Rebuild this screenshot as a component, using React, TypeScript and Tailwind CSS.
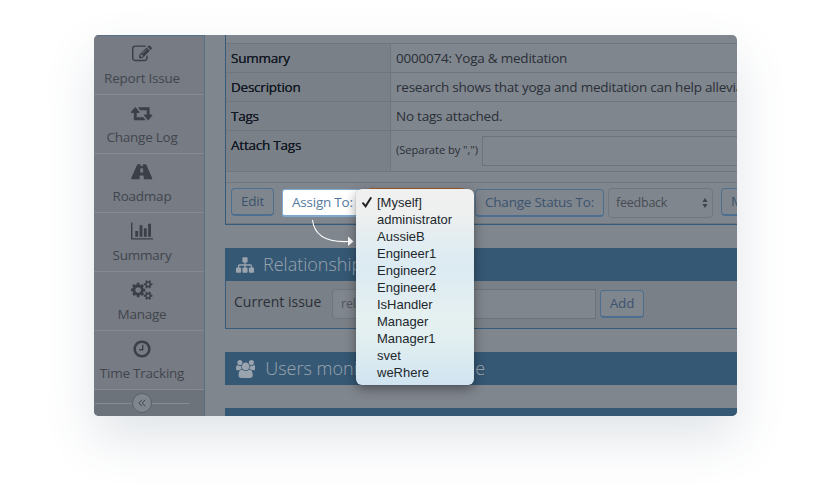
import React from "react";

const PENCIL =
  "M888 1184l116-116-152-152-116 116v56h96v96h56zm440-720q-16-16-33 1l-350 350q-17 17-1 33t33-1l350-350q17-17 1-33zm80 594v190q0 119-84.5 203.5t-203.5 84.5h-832q-119 0-203.5-84.5t-84.5-203.5v-832q0-119 84.5-203.5t203.5-84.5h832q63 0 117 25 15 7 18 23 3 17-9 29l-49 49q-14 14-32 8-23-6-45-6h-832q-66 0-113 47t-47 113v832q0 66 47 113t113 47h832q66 0 113-47t47-113v-126q0-13 9-22l64-64q15-15 35-7t20 29zm-96-738l288 288-672 672h-288v-288zm444 132l-92 92-288-288 92-92q28-28 68-28t68 28l152 152q28 28 28 68t-28 68z";
const RETWEET =
  "M1280 1504q0 13-9.5 22.5t-22.5 9.5h-960q-8 0-13.5-2t-9-7-5.5-8-3-11.5-1-11.5v-600h-192q-26 0-45-19t-19-45q0-24 15-41l320-384q19-22 49-22t49 22l320 384q15 17 15 41 0 26-19 45t-45 19h-192v384h576q16 0 25 11l160 192q7 10 7 21zm640-416q0 24-15 41l-320 384q-20 23-49 23t-49-23l-320-384q-15-17-15-41 0-26 19-45t45-19h192v-384h-576q-16 0-25-12l-160-192q-7-9-7-20 0-13 9.5-22.5t22.5-9.5h960q8 0 13.5 2t9 7 5.5 8 3 11.5 1 11.5v600h192q26 0 45 19t19 45z";
const ROAD =
  "M620 192h240l-12 150q-2 22 20 22h184q22 0 20-22l-12-150h240q52 0 74 54l520 1180q46 110-20 110h-720l-22-296q-2-24-26-24h-292q-24 0-26 24l-22 296h-720q-66 0-20-110l520-1180q22-54 74-54zM848 584l-26 330q-2 30 28 30h220q30 0 28-30l-26-330q-2-24-26-24h-172q-24 0-26 24z";
const CHART =
  "M640 896v512h-256v-512h256zm384-512v1024h-256v-1024h256zm1024 1152v128h-2048v-1536h128v1408h1920zm-640-896v768h-256v-768h256zm384-384v1152h-256v-1152h256z";
const COGS =
  "M896 896q0-106-75-181t-181-75-181 75-75 181 75 181 181 75 181-75 75-181zm768 512q0-52-38-90t-90-38-90 38-38 90q0 53 37.5 90.5t90.5 37.5 90.5-37.5 37.5-90.5zm0-1024q0-52-38-90t-90-38-90 38-38 90q0 53 37.5 90.5t90.5 37.5 90.5-37.5 37.5-90.5zm-384 421v185q0 10-7 19.5t-16 10.5l-155 24q-11 35-32 76 34 48 90 115 7 11 7 20 0 12-7 19-23 30-82.5 89.5t-78.5 59.5q-11 0-21-7l-115-90q-37 19-77 31-11 108-23 155-7 24-30 24h-186q-11 0-20-7.5t-10-17.5l-23-153q-34-10-75-31l-118 89q-7 7-20 7-11 0-21-8-144-133-144-160 0-9 7-19 10-14 41-53t47-61q-23-44-35-82l-152-24q-10-1-17-9.5t-7-19.5v-185q0-10 7-19.5t16-10.5l155-24q11-35 32-76-34-48-90-115-7-11-7-20 0-12 7-20 22-30 82-89t79-59q11 0 21 7l115 90q34-18 77-32 11-108 23-154 7-24 30-24h186q11 0 20 7.5t10 17.5l23 153q34 10 75 31l118-89q8-7 20-7 11 0 21 8 144 133 144 160 0 8-7 19-12 16-42 54t-45 60q23 48 34 82l152 23q10 2 17 10.5t7 19.5zm640 533v140q0 16-149 31-12 27-30 52 51 113 51 138 0 4-4 7-122 71-124 71-8 0-46-47t-52-68q-20 2-30 2t-30-2q-14 21-52 68t-46 47q-2 0-124-71-4-3-4-7 0-25 51-138-18-25-30-52-149-15-149-31v-140q0-16 149-31 13-29 30-52-51-113-51-138 0-4 4-7 4-2 35-20t59-34 30-16q8 0 46 46.5t52 67.5q20-2 30-2t30 2q51-71 92-112l6-2q4 0 124 70 4 3 4 7 0 25-51 138 17 23 30 52 149 15 149 31zm0-1024v140q0 16-149 31-12 27-30 52 51 113 51 138 0 4-4 7-122 71-124 71-8 0-46-47t-52-68q-20 2-30 2t-30-2q-14 21-52 68t-46 47q-2 0-124-71-4-3-4-7 0-25 51-138-18-25-30-52-149-15-149-31v-140q0-16 149-31 13-29 30-52-51-113-51-138 0-4 4-7 4-2 35-20t59-34 30-16q8 0 46 46.5t52 67.5q20-2 30-2t30 2q51-71 92-112l6-2q4 0 124 70 4 3 4 7 0 25-51 138 17 23 30 52 149 15 149 31z";
const CLOCK =
  "M1024 544v448q0 14-9 23t-23 9h-320q-14 0-23-9t-9-23v-64q0-14 9-23t23-9h224v-352q0-14 9-23t23-9h64q14 0 23 9t9 23zm416 352q0-148-73-273t-198-198-273-73-273 73-198 198-73 273 73 273 198 198 273 73 273-73 198-198 73-273zm224 0q0 209-103 385.5t-279.5 279.5-385.5 103-385.5-103-279.5-279.5-103-385.5 103-385.5 279.5-279.5 385.5-103 385.5 103 279.5 279.5 103 385.5z";
const SITEMAP =
  "M1792 1248v320q0 40-28 68t-68 28h-320q-40 0-68-28t-28-68v-320q0-40 28-68t68-28h96v-192h-512v192h96q40 0 68 28t28 68v320q0 40-28 68t-68 28h-320q-40 0-68-28t-28-68v-320q0-40 28-68t68-28h96v-192h-512v192h96q40 0 68 28t28 68v320q0 40-28 68t-68 28h-320q-40 0-68-28t-28-68v-320q0-40 28-68t68-28h96v-192q0-52 38-90t90-38h512v-192h-96q-40 0-68-28t-28-68v-320q0-40 28-68t68-28h320q40 0 68 28t28 68v320q0 40-28 68t-68 28h-96v192h512q52 0 90 38t38 90v192h96q40 0 68 28t28 68z";
const USERS =
  "M593 896q-162 5-265 128h-134q-82 0-138-40.5t-56-118.5q0-353 124-353 6 0 43.5 21t97.5 42.5 119 21.5q67 0 133-23-5 37-5 66 0 143 83 264zm1071 637q0 120-73 189.5t-194 69.5h-874q-121 0-194-69.5t-73-189.5q0-53 3.5-103.5t14-109 26.5-108.5 43-97.5 62-81 85.5-53.5 111.5-20q10 0 43 21.5t73 48 107 48 135 21.5 135-21.5 107-48 73-48 43-21.5q61 0 111.5 20t85.5 53.5 62 81 43 97.5 26.5 108.5 14 109 3.5 103.5zm-1024-1277q0 106-75 181t-181 75-181-75-75-181 75-181 181-75 181 75 75 181zm704 384q0 159-112.5 271.5t-271.5 112.5-271.5-112.5-112.5-271.5 112.5-271.5 271.5-112.5 271.5 112.5 112.5 271.5zm576 225q0 78-56 118.5t-138 40.5h-134q-103-123-265-128 93-121 93-264 0-29-5-66 66 23 133 23 59 0 119-21.5t97.5-42.5 43.5-21q124 0 124 353zm-128-609q0 106-75 181t-181 75-181-75-75-181 75-181 181-75 181 75 75 181z";

function Glyph({ d, w, size = 20 }: { d: string; w: number; size?: number }) {
  return (
    <svg
      width={(w / 1792) * size}
      height={size}
      viewBox={`0 0 ${w} 1792`}
      fill="currentColor"
      fillRule="evenodd"
      className="shrink-0"
    >
      <path d={d} />
    </svg>
  );
}

const nav = [
  { label: "Report Issue", d: PENCIL, w: 1792 },
  { label: "Change Log", d: RETWEET, w: 1920 },
  { label: "Roadmap", d: ROAD, w: 1920 },
  { label: "Summary", d: CHART, w: 2048 },
  { label: "Manage", d: COGS, w: 1920 },
  { label: "Time Tracking", d: CLOCK, w: 1792 },
];

function Sidebar() {
  return (
    <aside className="flex w-[111px] shrink-0 flex-col border-t border-r border-[#567087] bg-[#777b83]">
      {nav.map((n) => (
        <div
          key={n.label}
          className="flex h-[59px] shrink-0 flex-col items-center border-b border-[#858a92] pt-[8px] pr-[14px] text-[#3a3f48]"
        >
          <div className="flex h-5 items-center">
            <Glyph d={n.d} w={n.w} />
          </div>
          <span className="mt-[4px] leading-5 whitespace-nowrap text-[#41464e]">{n.label}</span>
        </div>
      ))}
      <div className="flex grow items-center bg-[#6c737b] pl-px">
        <div className="h-px w-[37px] bg-[#858c94]" />
        <div className="flex h-5 w-5 items-center justify-center rounded-full border border-[#5b6066] bg-[#80868e] text-[#43484f]">
          <svg width="8" height="8" viewBox="0 0 8 8" fill="none" stroke="currentColor">
            <path d="M4 .7 .9 4 4 7.3M7.3 .7 4.2 4 7.3 7.3" />
          </svg>
        </div>
        <div className="h-px w-[37px] bg-[#858c94]" />
      </div>
    </aside>
  );
}

function Row({
  label,
  children,
  tall,
}: {
  label: string;
  children: React.ReactNode;
  tall?: boolean;
}) {
  return (
    <div className={`flex shrink-0 border-t border-[#70767e] ${tall ? "h-[41px]" : "h-[29px]"}`}>
      <div className="w-[165px] shrink-0 border-r border-[#70767e] bg-[#7a8088] pt-[4px] pl-[5px] leading-5 text-[#111822] [text-shadow:0_0_0.2px_#151c27]">
        {label}
      </div>
      <div className="flex grow items-start pt-[4px] pl-[5px] leading-5 whitespace-nowrap text-[#2a2f37]">
        {children}
      </div>
    </div>
  );
}

function Btn({ children, className = "" }: { children: React.ReactNode; className?: string }) {
  return (
    <div
      className={`flex h-7 shrink-0 items-center justify-center rounded-[4px] border border-b-2 border-[#4d6f8f] whitespace-nowrap text-[#3b536d] ${className}`}
    >
      {children}
    </div>
  );
}

const options = [
  "[Myself]",
  "administrator",
  "AussieB",
  "Engineer1",
  "Engineer2",
  "Engineer4",
  "IsHandler",
  "Manager",
  "Manager1",
  "svet",
  "weRhere",
];

function AssignMenu() {
  return (
    <div className="absolute top-[154px] left-[262px] flex h-[196px] w-[118px] flex-col rounded-[6px] bg-[linear-gradient(180deg,#f0f0f0_0%,#eeefef_12%,#e0edf2_30%,#dceaf2_42%,#e5f0f0_65%,#e2eff0_76%,#d0e4f0_100%)] pt-[5px] font-['Liberation_Sans',sans-serif] text-[13px] tracking-normal text-[#22272c] shadow-[0_4px_12px_rgba(0,0,0,0.38),0_0_1px_rgba(0,0,0,0.4)]">
      {options.map((o, i) => (
        <div key={o} className="flex h-[17px] shrink-0 items-center">
          <span className="flex w-[21px] justify-start pl-[6px]">
            {i === 0 && (
              <svg width="10" height="11" viewBox="0 0 10 11" fill="none" stroke="#222">
                <path d="M1 6.2 3.6 9.3 8.8 1" strokeWidth="2" strokeLinecap="round" />
              </svg>
            )}
          </span>
          <span className="pt-px leading-4">{o}</span>
        </div>
      ))}
    </div>
  );
}

export default function App() {
  return (
    <div className="h-[492px] w-[830px] overflow-hidden bg-white pt-[35px] pl-[94px] font-['Open_Sans',sans-serif] text-[13.5px] tracking-[-0.23px]">
      <div className="h-[381px] w-[643px] rounded-[5px] shadow-[0_22px_50px_rgba(60,90,110,0.16)]">
        <div className="relative flex h-full w-full overflow-hidden rounded-[5px] bg-[#80868e]">
          <Sidebar />
          <main className="flex w-[532px] shrink-0 flex-col pl-[20px] [&>*]:w-[512px]">
            <section className="flex h-[190px] shrink-0 flex-col border-b border-l border-[#355b7c]">
              <div className="h-2 shrink-0" />
              <Row label="Summary">0000074: Yoga &amp; meditation</Row>
              <Row label="Description">research shows that yoga and meditation can help alleviate</Row>
              <Row label="Tags">No tags attached.</Row>
              <Row label="Attach Tags" tall>
                <span className="mt-[5px] w-[86px] text-[11.2px] tracking-[-0.08px]">
                  (Separate by ",")
                </span>
                <div className="mt-px h-[30px] w-[300px] shrink-0 border border-[#6d737b]" />
              </Row>
              <div className="h-[11px] shrink-0 border-t border-[#70767e]" />
              <div className="flex grow items-start border-t border-b border-[#70767e] pt-[5px] pl-[5px]">
                <Btn className="w-[43px]">Edit</Btn>
                <div className="mt-px ml-2 flex h-7 w-[80px] shrink-0 items-center rounded-[3px] border border-b-2 border-[#7fa9cf] bg-white pl-[9px] whitespace-nowrap text-[#567a9f]">
                  Assign To:
                </div>
                <div className="ml-[5px] h-[29px] w-[99px] shrink-0 rounded-[4px] border border-[#a4622c]" />
                <Btn className="mt-px ml-[9px] w-[129px]">Change Status To:</Btn>
                <div className="ml-1 flex h-[30px] w-[105px] shrink-0 items-center justify-between rounded-[4px] border border-[#70767e] pr-1 pl-[7px] text-[12.5px] text-[#474c54]">
                  feedback
                  <svg width="6" height="10" viewBox="0 0 6 10" fill="#3f444b">
                    <path d="M3 0 5.6 4H.4zM3 10 .4 6h5.2z" />
                  </svg>
                </div>
                <Btn className="ml-[8px] w-[120px] !justify-start pl-[9px]">Move</Btn>
              </div>
            </section>

            <div className="mt-[23px] flex h-[33px] shrink-0 items-center bg-[#355874] pl-[11px] text-[18px] font-light tracking-normal text-[#9ba4ae]">
              <Glyph d={SITEMAP} w={1792} size={18} />
              <span className="ml-[9px]">Relationships</span>
            </div>
            <section className="flex h-[48px] shrink-0 items-start border-b border-l border-[#355b7c] bg-[#7a8087] pt-2 pl-2">
              <span className="mt-[3px] w-[98px] text-[14px] leading-5 tracking-normal text-[#2a2f37]">
                Current issue
              </span>
              <div className="flex h-[30px] w-[130px] items-center rounded-l-[4px] border border-[#70767e] bg-[#80868e] pl-2 text-[12.5px] text-[#50555d]">
                related to
              </div>
              <div className="h-[30px] w-[134px] border border-[#6d737b] bg-[#80868e]" />
              <Btn className="mt-px ml-1 w-[44px] bg-[#80868e]">Add</Btn>
            </section>

            <div className="mt-[23px] flex h-[33px] shrink-0 items-center bg-[#355874] pl-[11px] text-[18px] font-light tracking-normal text-[#9ba4ae]">
              <Glyph d={USERS} w={1920} size={18} />
              <span className="ml-[10px]">Users monitoring this issue</span>
            </div>
            <div className="mt-[23px] h-[8px] shrink-0 bg-[#355874]" />
          </main>

          <svg
            className="absolute top-[184px] left-[216px]"
            width="46"
            height="30"
            viewBox="0 0 46 30"
            fill="none"
          >
            <path d="M2.5 1C4 14 14 23.5 38 22.5" stroke="#fff" strokeWidth="1.1" />
            <path d="M38 17.5 43.5 22.5 38 27z" fill="#fff" />
          </svg>
          <AssignMenu />
        </div>
      </div>
    </div>
  );
}
